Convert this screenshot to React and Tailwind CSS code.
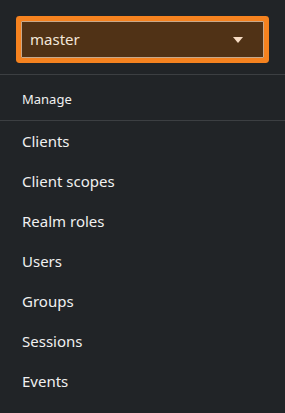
const items = ['Clients', 'Client scopes', 'Realm roles', 'Users', 'Groups', 'Sessions', 'Events'];

export default function App() {
    return (
        <div className="w-[285px] h-[413px] overflow-hidden bg-[#212427] text-[#f0f0f0] font-['Noto_Sans','Lato',sans-serif]">
            {/* Realm selector */}
            <div className="px-[21px] pt-[21px] pb-[16px] border-b border-[#3c3f42]">
                <button className="w-full h-[37px] flex items-center justify-between pl-[8px] pr-[20px] bg-[#503216] border border-[#c9a889] rounded-[1px] text-[15px] text-[#f3e6da] shadow-[0_0_0_5px_#f5821f] outline-none">
                    <span>master</span>
                    <svg width="10" height="6" viewBox="0 0 10 6" className="fill-[#f6dcc4]">
                        <path d="M0 0h10L5 6z" />
                    </svg>
                </button>
            </div>

            {/* Nav */}
            <div className="h-[46px] flex items-center pt-[4px] px-[22px] border-b border-[#3c3f42] text-[13px] text-[#f0f0f0]">
                Manage
            </div>
            <ul>
                {items.map((item) => (
                    <li key={item} className="h-[40px] flex items-center px-[22px] text-[15px]">
                        {item}
                    </li>
                ))}
            </ul>
        </div>
    );
}
